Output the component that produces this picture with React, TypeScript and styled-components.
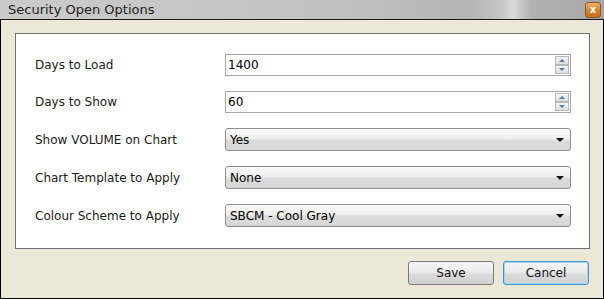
import styled, { createGlobalStyle } from "styled-components";

const Global = createGlobalStyle`
html, body { margin:0; padding:0; background:#ebe8d8; }
body { font-family: "DejaVu Sans", Verdana, sans-serif; }
`;

const Window = styled.div`
width:604px;
height:299px;
display:flex;
flex-direction:column;
box-sizing:border-box;
`;

const TitleBar = styled.div`
height:19px;
display:flex;
align-items:center;
justify-content:space-between;
padding:0 3px 0 8px;
background: linear-gradient(90deg, #cbcbcb 0%, #c2c2c2 55%, #b4b4b4 78%, #c6c6c6 83%, #dadada 85%, #b2b2b2 88%, #a6a6a6 100%);
`;

const Title = styled.span`
font-size:13px;
color:#1e1e1e;
`;

const CloseBtn = styled.div`
width:16px;
height:16px;
margin-top:1px;
border-radius:3px;
border:1px solid #8a5a22;
box-sizing:border-box;
background: linear-gradient(180deg, #f1b36a 0%, #d9832d 50%, #c86e1c 100%);
display:flex;
align-items:center;
justify-content:center;
color:#fff;
font-size:10px;
font-weight:bold;
line-height:1;
`;

const Body = styled.div`
flex:1;
border:1px solid #000;
border-top:1px solid #1a1a1a;
padding:13px 13px 12px 14px;
display:flex;
flex-direction:column;
box-sizing:border-box;
`;

const Panel = styled.div`
background:#fff;
border:1px solid #707070;
height:216px;
box-sizing:border-box;
padding:20px 18px 0 19px;
display:grid;
grid-template-columns:190px 1fr;
grid-auto-rows:min-content;
row-gap:15px;
align-items:center;
`;

const Label = styled.span`
font-size:12px;
color:#1a1a1a;
`;

const Input = styled.div`
height:22px;
border:1px solid #a7a7aa;
box-sizing:border-box;
display:flex;
align-items:center;
padding-left:2px;
font-size:12px;
color:#000;
position:relative;
`;

const Spin = styled.div`
position:absolute;
right:1px;
top:1px;
bottom:1px;
width:14px;
display:flex;
flex-direction:column;
`;

const SpinBtn = styled.div<{ $down?: boolean }>`
flex:1;
border:1px solid #b9b9bd;
background:linear-gradient(180deg,#f7f7f7,#dcdcdc);
display:flex;
align-items:center;
justify-content:center;
&::after {
  content:"";
  border-left:3px solid transparent;
  border-right:3px solid transparent;
  ${(p) => (p.$down ? "border-top:3px solid #4f7fb0;" : "border-bottom:3px solid #4f7fb0;")}
}
`;

const Select = styled.div`
height:23px;
border:1px solid #8e8e92;
border-radius:3px;
box-sizing:border-box;
background:linear-gradient(180deg,#fbfbfb 0%,#eeeeee 45%,#dcdcdc 55%,#d6d6d6 100%);
display:flex;
align-items:center;
justify-content:space-between;
padding:0 6px 0 4px;
font-size:12px;
color:#000;
&::after {
  content:"";
  border-left:4px solid transparent;
  border-right:4px solid transparent;
  border-top:4px solid #111;
}
`;

const Footer = styled.div`
display:flex;
justify-content:flex-end;
gap:9px;
margin-top:12px;
padding-right:1px;
`;

const Button = styled.button<{ $default?: boolean }>`
width:86px;
height:24px;
font-family:"DejaVu Sans", Verdana, sans-serif;
font-size:12px;
color:#111;
border-radius:3px;
border:1px solid ${(p) => (p.$default ? "#3c95d4" : "#7a7a7a")};
box-shadow:${(p) => (p.$default ? "inset 0 0 0 1px #a7d6f5" : "none")};
background:linear-gradient(180deg,#f6f6f6 0%,#ebebeb 45%,#dcdcdc 55%,#d0d0d0 100%);
padding:0;
`;

function NumberField({ value }: { value: string }) {
  return (
    <Input>
      {value}
      <Spin>
        <SpinBtn />
        <SpinBtn $down />
      </Spin>
    </Input>
  );
}

export default function App() {
  return (
    <Window>
      <Global />
      <TitleBar>
        <Title>Security Open Options</Title>
        <CloseBtn>x</CloseBtn>
      </TitleBar>
      <Body>
        <Panel>
          <Label>Days to Load</Label>
          <NumberField value="1400" />
          <Label>Days to Show</Label>
          <NumberField value="60" />
          <Label>Show VOLUME on Chart</Label>
          <Select>Yes</Select>
          <Label>Chart Template to Apply</Label>
          <Select>None</Select>
          <Label>Colour Scheme to Apply</Label>
          <Select>SBCM - Cool Gray</Select>
        </Panel>
        <Footer>
          <Button>Save</Button>
          <Button $default>Cancel</Button>
        </Footer>
      </Body>
    </Window>
  );
}
